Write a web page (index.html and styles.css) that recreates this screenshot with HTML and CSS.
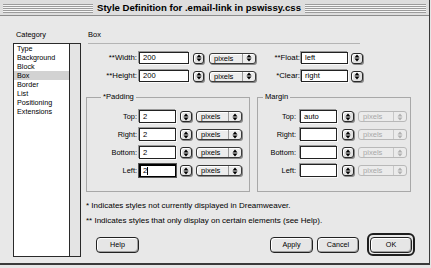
FILE: index.html
```html
<!DOCTYPE html>
<html>
<head>
<meta charset="utf-8">
<title>Style Definition</title>
<link rel="stylesheet" href="styles.css">
</head>
<body>
<div class="window">
  <div class="titlebar">
    <div class="stripes stripes-left"></div>
    <div class="title">Style Definition for .email-link in pswissy.css</div>
    <div class="stripes stripes-right"></div>
  </div>
  <div class="content">
    <div class="sidebar">
      <div class="cat-label">Category</div>
      <div class="listbox">
        <ul class="list">
          <li>Type</li>
          <li>Background</li>
          <li>Block</li>
          <li class="sel">Box</li>
          <li>Border</li>
          <li>List</li>
          <li>Positioning</li>
          <li>Extensions</li>
        </ul>
        <div class="scrolltrack"></div>
      </div>
    </div>
    <div class="panel">
      <div class="section-title">Box</div>
      <div class="rule"></div>

      <div class="toprow">
        <div class="lbl lbl-a">**Width:</div>
        <div class="field f-top"><span>200</span></div>
        <div class="stepper s-a"><svg width="6" height="8" viewBox="0 0 6 8"><path d="M0.5 3.5 L3 0.5 L5.5 3.5 Z M0.5 4.5 L3 7.5 L5.5 4.5 Z" fill="#000"/></svg></div>
        <div class="popup p-a"><span class="ptext">pixels</span><span class="parrow"><svg width="6" height="8" viewBox="0 0 6 8"><path d="M0.5 3.5 L3 0.5 L5.5 3.5 Z M0.5 4.5 L3 7.5 L5.5 4.5 Z" fill="#000"/></svg></span></div>
        <div class="lbl lbl-b">**Float:</div>
        <div class="field f-side"><span>left</span></div>
        <div class="stepper s-b"><svg width="6" height="8" viewBox="0 0 6 8"><path d="M0.5 3.5 L3 0.5 L5.5 3.5 Z M0.5 4.5 L3 7.5 L5.5 4.5 Z" fill="#000"/></svg></div>
      </div>

      <div class="toprow row2">
        <div class="lbl lbl-a">**Height:</div>
        <div class="field f-top"><span>200</span></div>
        <div class="stepper s-a"><svg width="6" height="8" viewBox="0 0 6 8"><path d="M0.5 3.5 L3 0.5 L5.5 3.5 Z M0.5 4.5 L3 7.5 L5.5 4.5 Z" fill="#000"/></svg></div>
        <div class="popup p-a"><span class="ptext">pixels</span><span class="parrow"><svg width="6" height="8" viewBox="0 0 6 8"><path d="M0.5 3.5 L3 0.5 L5.5 3.5 Z M0.5 4.5 L3 7.5 L5.5 4.5 Z" fill="#000"/></svg></span></div>
        <div class="lbl lbl-b">*Clear:</div>
        <div class="field f-side"><span>right</span></div>
        <div class="stepper s-b"><svg width="6" height="8" viewBox="0 0 6 8"><path d="M0.5 3.5 L3 0.5 L5.5 3.5 Z M0.5 4.5 L3 7.5 L5.5 4.5 Z" fill="#000"/></svg></div>
      </div>

      <div class="groups">
        <fieldset class="group g-pad">
          <legend>*Padding</legend>
          <div class="grow">
            <div class="glbl">Top:</div>
            <div class="field f-g"><span>2</span></div>
            <div class="stepper s-g"><svg width="6" height="8" viewBox="0 0 6 8"><path d="M0.5 3.5 L3 0.5 L5.5 3.5 Z M0.5 4.5 L3 7.5 L5.5 4.5 Z" fill="#000"/></svg></div>
            <div class="popup p-g"><span class="ptext">pixels</span><span class="parrow"><svg width="6" height="8" viewBox="0 0 6 8"><path d="M0.5 3.5 L3 0.5 L5.5 3.5 Z M0.5 4.5 L3 7.5 L5.5 4.5 Z" fill="#000"/></svg></span></div>
          </div>
          <div class="grow">
            <div class="glbl">Right:</div>
            <div class="field f-g"><span>2</span></div>
            <div class="stepper s-g"><svg width="6" height="8" viewBox="0 0 6 8"><path d="M0.5 3.5 L3 0.5 L5.5 3.5 Z M0.5 4.5 L3 7.5 L5.5 4.5 Z" fill="#000"/></svg></div>
            <div class="popup p-g"><span class="ptext">pixels</span><span class="parrow"><svg width="6" height="8" viewBox="0 0 6 8"><path d="M0.5 3.5 L3 0.5 L5.5 3.5 Z M0.5 4.5 L3 7.5 L5.5 4.5 Z" fill="#000"/></svg></span></div>
          </div>
          <div class="grow">
            <div class="glbl">Bottom:</div>
            <div class="field f-g"><span>2</span></div>
            <div class="stepper s-g"><svg width="6" height="8" viewBox="0 0 6 8"><path d="M0.5 3.5 L3 0.5 L5.5 3.5 Z M0.5 4.5 L3 7.5 L5.5 4.5 Z" fill="#000"/></svg></div>
            <div class="popup p-g"><span class="ptext">pixels</span><span class="parrow"><svg width="6" height="8" viewBox="0 0 6 8"><path d="M0.5 3.5 L3 0.5 L5.5 3.5 Z M0.5 4.5 L3 7.5 L5.5 4.5 Z" fill="#000"/></svg></span></div>
          </div>
          <div class="grow">
            <div class="glbl">Left:</div>
            <div class="field f-g focused"><span>2</span><span class="caret"></span></div>
            <div class="stepper s-g"><svg width="6" height="8" viewBox="0 0 6 8"><path d="M0.5 3.5 L3 0.5 L5.5 3.5 Z M0.5 4.5 L3 7.5 L5.5 4.5 Z" fill="#000"/></svg></div>
            <div class="popup p-g"><span class="ptext">pixels</span><span class="parrow"><svg width="6" height="8" viewBox="0 0 6 8"><path d="M0.5 3.5 L3 0.5 L5.5 3.5 Z M0.5 4.5 L3 7.5 L5.5 4.5 Z" fill="#000"/></svg></span></div>
          </div>
        </fieldset>

        <fieldset class="group g-mar">
          <legend>Margin</legend>
          <div class="grow">
            <div class="glbl m">Top:</div>
            <div class="field f-m"><span>auto</span></div>
            <div class="stepper s-m"><svg width="6" height="8" viewBox="0 0 6 8"><path d="M0.5 3.5 L3 0.5 L5.5 3.5 Z M0.5 4.5 L3 7.5 L5.5 4.5 Z" fill="#000"/></svg></div>
            <div class="popup p-m disabled"><span class="ptext">pixels</span><span class="parrow"><svg width="6" height="8" viewBox="0 0 6 8"><path d="M0.5 3.5 L3 0.5 L5.5 3.5 Z M0.5 4.5 L3 7.5 L5.5 4.5 Z" fill="#b0b0b0"/></svg></span></div>
          </div>
          <div class="grow">
            <div class="glbl m">Right:</div>
            <div class="field f-m"><span></span></div>
            <div class="stepper s-m"><svg width="6" height="8" viewBox="0 0 6 8"><path d="M0.5 3.5 L3 0.5 L5.5 3.5 Z M0.5 4.5 L3 7.5 L5.5 4.5 Z" fill="#000"/></svg></div>
            <div class="popup p-m disabled"><span class="ptext">pixels</span><span class="parrow"><svg width="6" height="8" viewBox="0 0 6 8"><path d="M0.5 3.5 L3 0.5 L5.5 3.5 Z M0.5 4.5 L3 7.5 L5.5 4.5 Z" fill="#b0b0b0"/></svg></span></div>
          </div>
          <div class="grow">
            <div class="glbl m">Bottom:</div>
            <div class="field f-m"><span></span></div>
            <div class="stepper s-m"><svg width="6" height="8" viewBox="0 0 6 8"><path d="M0.5 3.5 L3 0.5 L5.5 3.5 Z M0.5 4.5 L3 7.5 L5.5 4.5 Z" fill="#000"/></svg></div>
            <div class="popup p-m disabled"><span class="ptext">pixels</span><span class="parrow"><svg width="6" height="8" viewBox="0 0 6 8"><path d="M0.5 3.5 L3 0.5 L5.5 3.5 Z M0.5 4.5 L3 7.5 L5.5 4.5 Z" fill="#b0b0b0"/></svg></span></div>
          </div>
          <div class="grow">
            <div class="glbl m">Left:</div>
            <div class="field f-m"><span></span></div>
            <div class="stepper s-m"><svg width="6" height="8" viewBox="0 0 6 8"><path d="M0.5 3.5 L3 0.5 L5.5 3.5 Z M0.5 4.5 L3 7.5 L5.5 4.5 Z" fill="#000"/></svg></div>
            <div class="popup p-m disabled"><span class="ptext">pixels</span><span class="parrow"><svg width="6" height="8" viewBox="0 0 6 8"><path d="M0.5 3.5 L3 0.5 L5.5 3.5 Z M0.5 4.5 L3 7.5 L5.5 4.5 Z" fill="#b0b0b0"/></svg></span></div>
          </div>
        </fieldset>
      </div>

      <div class="note">* Indicates styles not currently displayed in Dreamweaver.</div>
      <div class="note note2">** Indicates styles that only display on certain elements (see Help).</div>

      <div class="buttons">
        <div class="btn b-help">Help</div>
        <div class="btn b-apply">Apply</div>
        <div class="btn b-cancel">Cancel</div>
        <div class="ok-ring"><div class="btn b-ok">OK</div></div>
      </div>
    </div>
  </div>
</div>
</body>
</html>
```

FILE: styles.css
```css
* { box-sizing: border-box; }
html, body { margin: 0; padding: 0; }
body {
  width: 431px;
  height: 268px;
  background: #e6e6e6;
  font-family: "Liberation Sans", Arial, sans-serif;
  font-size: 7.5px;
  color: #000;
  overflow: hidden;
}
.window {
  width: 430px;
  height: 265px;
  background: #e8e8e8;
  border-right: 1px solid #3a3a3a;
  border-bottom: 2px solid #3a3a3a;
}

/* title bar */
.titlebar {
  height: 16px;
  display: flex;
  align-items: flex-start;
  padding: 0 3px;
  background: #dedede;
  border-bottom: 1px solid #8c8c8c;
}
.stripes {
  height: 9px;
  margin-top: 4px;
  background: repeating-linear-gradient(to bottom, #9c9c9c 0 1px, #f6f6f6 1px 2px);
}
.stripes-left { width: 90px; }
.stripes-right { flex: 1; }
.title {
  font-weight: bold;
  font-size: 9.6px;
  line-height: 15px;
  padding: 0 4px;
  white-space: nowrap;
}

/* content */
.content {
  display: flex;
  height: 247px;
}
.sidebar {
  margin-left: 13px;
  width: 68px;
  padding-top: 14px;
}
.cat-label {
  line-height: 10px;
  padding-left: 3px;
  font-size: 7.4px;
}
.listbox {
  margin-top: 3px;
  height: 214px;
  border: 1px solid #2a2a2a;
  background: #fff;
  display: flex;
}
.list {
  flex: 1;
  list-style: none;
  margin: 0;
  padding: 0;
  font-size: 7.2px;
}
.list li {
  line-height: 9px;
  height: 9px;
  padding-left: 3px;
  white-space: nowrap;
}
.list li.sel { background: #d2d2d2; }
.scrolltrack {
  width: 11px;
  border-left: 1px solid #2a2a2a;
  background: #e4e4e4;
}

/* panel */
.panel {
  margin-left: 5px;
  width: 329px;
  display: flex;
  flex-direction: column;
}
.section-title {
  padding-top: 14px;
  padding-left: 2px;
  line-height: 10px;
  height: 24px;
}
.rule {
  margin-top: 3px;
  margin-left: 2px;
  width: 272px;
  height: 1px;
  background: #b4b4b4;
}

.toprow {
  margin-top: 8px;
  height: 12px;
  display: flex;
  align-items: center;
}
.toprow.row2 { margin-top: 6px; }
.lbl {
  text-align: right;
  white-space: nowrap;
  line-height: 12px;
  font-size: 7.8px;
}
.lbl-a { width: 51px; }
.lbl-b { width: 44px; }

/* text fields */
.field {
  height: 12px;
  background: #fff;
  border: 1px solid #222;
  box-shadow: -1px -1px 0 #9a9a9a, 1px 1px 0 #fafafa;
  display: flex;
  align-items: center;
  padding-left: 3px;
  font-size: 7.6px;
  line-height: 10px;
}
.field.focused {
  border: 1px solid #000;
  box-shadow: 0 0 0 1px #555, inset 1px 1px 0 #000;
}
.caret {
  display: inline-block;
  width: 1px;
  height: 8px;
  background: #000;
  margin-left: 0;
}
.f-top { width: 50px; margin-left: 2px; }
.f-side { width: 47px; margin-left: 1px; }
.f-g { width: 37px; margin-left: 2px; }
.f-m { width: 37px; margin-left: 4px; }

/* little arrows */
.stepper {
  height: 11px;
  width: 12px;
  border: 1px solid #2a2a2a;
  border-radius: 3px;
  background: #e2e2e2;
  box-shadow: inset 1px 1px 0 #fff, 1px 1px 0 #8a8a8a;
  display: flex;
  align-items: center;
  justify-content: center;
}
.s-a { margin-left: 4px; width: 11px; }
.s-b { margin-left: 3px; }
.s-g { margin-left: 4px; }
.s-m { margin-left: 5px; }

/* popup menus */
.popup {
  height: 11px;
  border: 1px solid #3a3a3a;
  border-radius: 3px;
  background: #ececec;
  box-shadow: inset 1px 1px 0 #fff, 1px 1px 0 #8a8a8a;
  display: flex;
  align-items: center;
}
.ptext {
  flex: 1;
  padding-left: 4px;
  font-size: 7.6px;
  line-height: 9px;
}
.parrow {
  width: 13px;
  height: 100%;
  border-left: 1px solid #9a9a9a;
  display: flex;
  align-items: center;
  justify-content: center;
}
.p-a { width: 47px; margin-left: 5px; }
.p-g { width: 46px; margin-left: 4px; }
.p-m { width: 49px; margin-left: 4px; }
.popup.disabled {
  border-color: #b8b8b8;
  color: #a8a8a8;
  box-shadow: none;
  background: #ebebeb;
}
.popup.disabled .parrow { border-left-color: #c8c8c8; }

/* group boxes */
.groups {
  margin-top: 10px;
  display: flex;
  gap: 7px;
}
.group {
  margin: 0;
  border: 1px solid #a8a8a8;
  padding: 8px 0 14px 0;
  display: flex;
  flex-direction: column;
  gap: 5px;
  min-width: 0;
}
.group legend {
  font-size: 7.6px;
  line-height: 10px;
  padding: 0 2px;
}
.g-pad { width: 164px; }
.g-pad legend { margin-left: 14px; }
.g-mar { width: 154px; }
.g-mar legend { margin-left: 5px; }
.grow {
  height: 13px;
  display: flex;
  align-items: center;
}
.grow .field { height: 13px; }
.glbl {
  width: 50px;
  text-align: right;
  white-space: nowrap;
  font-size: 7.4px;
}
.glbl.m { width: 38px; }

/* notes */
.note {
  margin-top: 9px;
  line-height: 10px;
  font-size: 8px;
  white-space: nowrap;
}
.note.note2 { margin-top: 5px; }

/* buttons */
.buttons {
  margin-top: 7px;
  height: 23px;
  display: flex;
  align-items: center;
}
.btn {
  height: 16px;
  border: 1px solid #222;
  border-radius: 4px;
  background: #e6e6e6;
  box-shadow: inset 1px 1px 0 #fff, inset -1px -1px 0 #a0a0a0;
  display: flex;
  align-items: center;
  justify-content: center;
  font-size: 7.2px;
}
.b-help { width: 43px; margin-left: 10px; }
.b-apply { width: 43px; margin-left: auto; }
.b-cancel { width: 42px; margin-left: 4px; }
.ok-ring {
  margin-left: 8px;
  height: 23px;
  width: 48px;
  border: 2px solid #1e1e1e;
  border-radius: 6px;
  padding: 1px;
  display: flex;
  align-items: center;
}
.b-ok { width: 100%; }
```
